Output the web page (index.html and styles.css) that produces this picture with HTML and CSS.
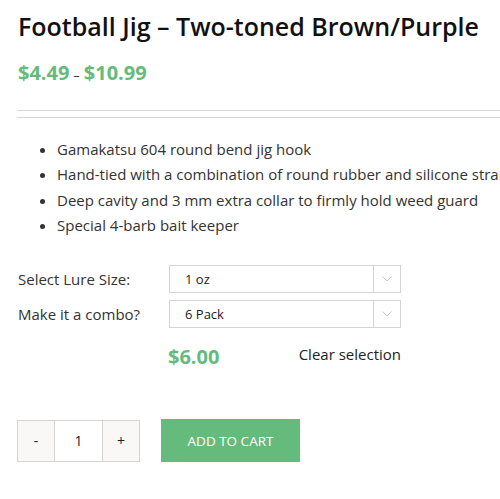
FILE: index.html
```html
<!DOCTYPE html>
<html>
<head>
<meta charset="utf-8">
<link rel="stylesheet" href="styles.css">
</head>
<body>
<div class="product">
  <h1 class="title">Football Jig – Two-toned Brown/Purple</h1>
  <p class="price"><span class="amt">$4.49</span> <span class="dash">–</span> <span class="amt">$10.99</span></p>
  <div class="rule"></div>
  <div class="rule second"></div>
  <ul class="features">
    <li>Gamakatsu 604 round bend jig hook</li>
    <li>Hand-tied with a combination of round rubber and silicone strands</li>
    <li>Deep cavity and 3 mm extra collar to firmly hold weed guard</li>
    <li>Special 4-barb bait keeper</li>
  </ul>
  <div class="variations">
    <div class="var-row">
      <label class="var-label">Select Lure Size:</label>
      <div class="select"><span class="sel-text">1 oz</span><span class="sel-arrow"><svg width="10" height="6" viewBox="0 0 10 6"><path d="M0.5 0.5 L5 5 L9.5 0.5" fill="none" stroke="#c8c8c8" stroke-width="1"/></svg></span></div>
    </div>
    <div class="var-row">
      <label class="var-label">Make it a combo?</label>
      <div class="select"><span class="sel-text">6 Pack</span><span class="sel-arrow"><svg width="10" height="6" viewBox="0 0 10 6"><path d="M0.5 0.5 L5 5 L9.5 0.5" fill="none" stroke="#c8c8c8" stroke-width="1"/></svg></span></div>
    </div>
    <div class="var-foot">
      <span class="var-price">$6.00</span>
      <span class="clear">Clear selection</span>
    </div>
  </div>
  <div class="cart">
    <div class="qty">
      <span class="qbtn">-</span>
      <span class="qval">1</span>
      <span class="qbtn">+</span>
    </div>
    <button class="add">ADD TO CART</button>
  </div>
</div>
</body>
</html>
```
FILE: styles.css
```css
html, body { margin: 0; padding: 0; background: #fff; }
body { font-family: "Open Sans", "Noto Sans", sans-serif; color: #333; overflow: hidden; width: 500px; height: 499px; }
.product { padding: 0 0 0 17px; }
.title { margin: 0; padding-top: 10px; font-size: 25px; font-weight: 600; color: #111; line-height: 33px; padding-left: 1px; white-space: nowrap; }
.price { margin: 0; margin-top: 19px; height: 22px; line-height: 22px; padding-left: 1px; }
.price .amt { color: #65bb7b; font-weight: 700; font-size: 20px; }
.price .dash { color: #333; font-size: 12px; }
.rule { height: 0; border-top: 1px solid #d4d4d4; margin-top: 26px; }
.rule.second { margin-top: 6px; }
.features { margin: 19px 0 0 0; padding-left: 40px; font-size: 15px; line-height: 25.3px; color: #333; white-space: nowrap; }
.features li { padding-left: 0; }
.variations { margin-top: 27px; width: 384px; }
.var-row { display: flex; align-items: center; height: 28px; margin-bottom: 7px; }
.var-label { width: 151px; padding-left: 1px; font-size: 15px; color: #333; }
.select { flex: 1; height: 26px; border: 1px solid #d4d4d4; display: flex; align-items: center; }
.sel-text { flex: 1; padding-left: 15px; font-size: 13px; color: #222; }
.sel-arrow { width: 26px; height: 26px; border-left: 1px solid #d4d4d4; display: flex; align-items: center; justify-content: center; }
.var-foot { display: flex; justify-content: space-between; align-items: center; margin-left: 151px; margin-top: 13px; height: 30px; }
.var-price { color: #65bb7b; font-weight: 700; font-size: 20px; }
.clear { font-size: 15px; color: #222; margin-top: -4px; }
.cart { display: flex; align-items: center; margin-top: 48px; }
.qty { display: flex; height: 40px; border: 1px solid #d4d4d4; }
.qbtn { width: 36px; background: #f9f8f7; display: flex; align-items: center; justify-content: center; font-size: 14px; color: #222; }
.qval { width: 47px; border-left: 1px solid #d4d4d4; border-right: 1px solid #d4d4d4; display: flex; align-items: center; justify-content: center; font-size: 14px; color: #222; background: #fff; }
.add { margin-left: 21px; width: 139px; height: 43px; background: #65bb7b; border: 0; color: #fff; font-family: "Open Sans", sans-serif; font-size: 13.5px; padding: 0; }
```
